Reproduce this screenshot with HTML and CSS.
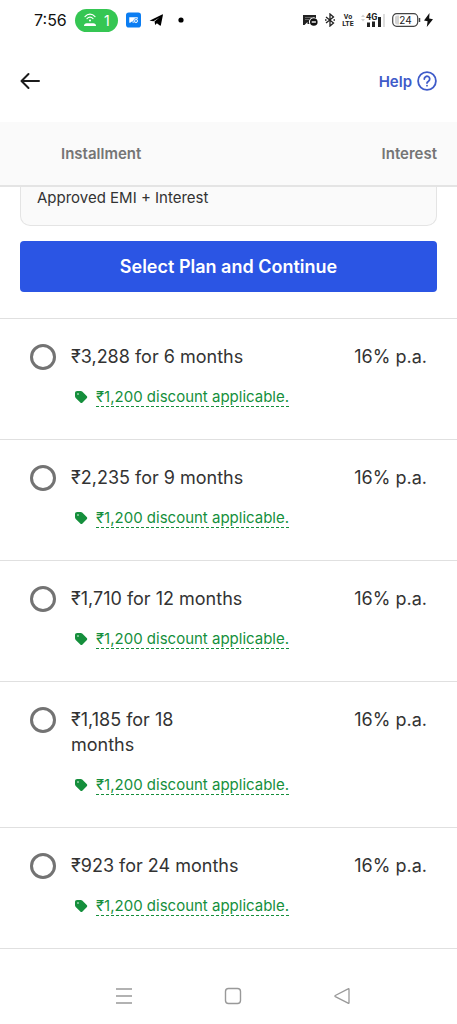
FILE: index.html
```html
<!DOCTYPE html>
<html lang="en">
<head>
<meta charset="utf-8">
<meta name="viewport" content="width=device-width, initial-scale=1">
<title>Select EMI plan</title>
<link rel="stylesheet" href="styles.css">
</head>
<body>
<svg class="defs" width="0" height="0" aria-hidden="true">
  <symbol id="tag" viewBox="0 0 14 14"><path fill-rule="evenodd" d="M1 3.200C1 1.800 1.800 1 3.200 1h3.600c.6 0 1 .2 1.400.6l4.500 4.400c.7.700.7 1.500 0 2.200l-4.200 4.200c-.7.700-1.500.7-2.200 0L1.700 7.900C1.200 7.400 1 6.900 1 6.300zM4 3.200a.8.800 0 1 0 0 1.600.8.800 0 0 0 0-1.600z"/></symbol>
</svg>
<div class="screen">
  <div class="status">
    <div class="status-group">
      <span class="clock">7:56</span>
      <span class="hotspot">
        <svg width="14" height="14" viewBox="0 0 14 14" fill="none" stroke="#fff" stroke-width="1.200" stroke-linecap="round"><path d="M2 3.600C4.800.4 9.200.4 12 3.600M4 5.600c1.800-1.900 4.200-1.900 6 0"/><circle cx="7" cy="7.400" r="1" fill="#fff" stroke="none"/><path d="M1 13c0-1.800 1-2.800 2.800-2.800h6.400c1.800 0 2.800 1 2.800 2.800z" fill="#fff" stroke="none"/></svg>
        1
      </span>
      <svg width="15" height="16" viewBox="0 0 16 16"><rect width="16" height="16" rx="3" fill="#0b7df2"/><path d="M3.500 5h9v2.200a2.700 2.700 0 0 0-4 3.800H7V9L4.500 11h-1z" fill="#fff"/><circle cx="10.500" cy="9" r="1.800" fill="none" stroke="#fff"/><path d="M9.800 9h1.400" stroke="#fff" stroke-width=".8"/></svg>
      <svg class="plane" width="15" height="14" viewBox="0 0 16 14"><path d="M1 7.400 14 1.100c.6-.3 1 0 .8.700l-2.100 10.600c-.1.600-.6.800-1.100.4L8.400 10.400l-1.800 1.800-.7-3.500 5.300-4.400-6.500 3.900-3.500-.3c-.5-.1-.6-.4-.2-.5z"/></svg>
      <svg width="6" height="6" viewBox="0 0 6 6"><circle cx="3" cy="3" r="2.600"/></svg>
    </div>
    <div class="status-group status-right">
      <svg width="15" height="13" viewBox="0 0 15 13"><path d="M0 1h13v3.200A4.500 4.500 0 0 0 6.500 10H4.500V8L1.500 11H0z" fill="#222"/><path d="M2 3.500h8M2 5.500h4" stroke="#888" stroke-width=".7"/><circle cx="10.800" cy="8" r="3.800" fill="#111"/><path d="M8.700 8h4.200" stroke="#fff" stroke-width="1.400"/></svg>
      <svg width="10" height="14" viewBox="0 0 10 14" fill="none" stroke="#222" stroke-width="1.300"><path d="M1 4l7.500 6L5 13V1l3.500 3L1 10"/><path d="M0 7h1.500M8.500 7H10"/></svg>
      <svg width="12" height="14" viewBox="0 0 12 14" font-family="Roboto, sans-serif" font-size="7" font-weight="700" fill="#222" text-anchor="middle"><text x="6" y="6">Vo</text><text x="6" y="13">LTE</text></svg>
      <svg width="24" height="16" viewBox="0 0 24 16"><path d="M0 5l2-2.500L4 5zM0 7l2 2.500L4 7z" fill="#d0d0d0"/><text x="5" y="8" font-family="Roboto, sans-serif" font-size="9" font-weight="700" fill="#222">4G</text><path d="M6 10.500h3V15H6zM11 9.500h3V15h-3zM17 5h3v10h-3z" fill="#222"/><path d="M22 2h2v13h-2z" fill="#ddd"/></svg>
      <svg width="29" height="14" viewBox="0 0 29 14"><rect x=".7" y=".7" width="25" height="12.600" rx="4" fill="#fff" stroke="#444" stroke-width="1.200"/><path d="M3 4.500A2 2 0 0 1 5 2.500h2v9H5a2 2 0 0 1-2-2z" fill="#d3d3d3"/><path d="M27.500 5v4" stroke="#444" stroke-width="1.500"/><text x="13.500" y="10.800" font-family="Inter, sans-serif" font-size="10" text-anchor="middle" fill="#222">24</text></svg>
      <svg class="bolt" width="9" height="14" viewBox="0 0 9 14"><path d="M5.500 0 0 7.600l3.600.6L2.800 14 9 6.200l-3.800-.6z" fill="#111"/></svg>
    </div>
  </div>

  <header class="topbar">
    <button class="back" type="button" aria-label="Back">
      <svg width="20" height="18" viewBox="0 0 20 18" fill="none" stroke="#1b1b1b" stroke-width="2" stroke-linecap="round" stroke-linejoin="round"><path d="M19 9H2M8.500 2 1.500 9l7 7"/></svg>
    </button>
    <a class="help" href="#help">Help
      <svg width="20" height="20" viewBox="0 0 20 20" fill="none" stroke="#3f5bc9" stroke-width="1.800" stroke-linecap="round"><circle cx="10" cy="10" r="8.900"/><path d="M7.300 8a2.700 2.700 0 1 1 4.200 2.200c-.9.600-1.500 1-1.500 1.900"/><path d="M10 14.600v.1"/></svg>
    </a>
  </header>

  <div class="columns"><span>Installment</span><span>Interest</span></div>

  <main>
    <div class="offer">
      <p class="note">Approved EMI + Interest</p>
      <button class="cta" type="button">Select Plan and Continue</button>
    </div>
    <ul class="plans">
      <li class="plan">
        <input class="radio" type="radio" name="plan" id="p6">
        <div class="details"><label for="p6">₹3,288 for 6 months</label>
          <div class="discount"><svg width="14" height="14"><use href="#tag"/></svg><a href="#discount">₹1,200 discount applicable.</a></div></div>
        <span class="rate">16% p.a.</span>
      </li>
      <li class="plan">
        <input class="radio" type="radio" name="plan" id="p9">
        <div class="details"><label for="p9">₹2,235 for 9 months</label>
          <div class="discount"><svg width="14" height="14"><use href="#tag"/></svg><a href="#discount">₹1,200 discount applicable.</a></div></div>
        <span class="rate">16% p.a.</span>
      </li>
      <li class="plan">
        <input class="radio" type="radio" name="plan" id="p12">
        <div class="details"><label for="p12">₹1,710 for 12 months</label>
          <div class="discount"><svg width="14" height="14"><use href="#tag"/></svg><a href="#discount">₹1,200 discount applicable.</a></div></div>
        <span class="rate">16% p.a.</span>
      </li>
      <li class="plan">
        <input class="radio" type="radio" name="plan" id="p18">
        <div class="details"><label for="p18">₹1,185 for 18<br>months</label>
          <div class="discount"><svg width="14" height="14"><use href="#tag"/></svg><a href="#discount">₹1,200 discount applicable.</a></div></div>
        <span class="rate">16% p.a.</span>
      </li>
      <li class="plan">
        <input class="radio" type="radio" name="plan" id="p24">
        <div class="details"><label for="p24">₹923 for 24 months</label>
          <div class="discount"><svg width="14" height="14"><use href="#tag"/></svg><a href="#discount">₹1,200 discount applicable.</a></div></div>
        <span class="rate">16% p.a.</span>
      </li>
    </ul>
  </main>

  <nav class="sysnav">
    <button type="button" aria-label="Recent apps"><svg width="18" height="18" viewBox="0 0 18 18" stroke="#999" stroke-width="1.400"><path d="M1 2h16M1 9h16M1 16h16"/></svg></button>
    <button type="button" aria-label="Home"><svg width="18" height="18" viewBox="0 0 18 18" fill="none" stroke="#999" stroke-width="1.400"><rect x="1.500" y="1.500" width="15" height="15" rx="3"/></svg></button>
    <button type="button" aria-label="Back"><svg width="18" height="18" viewBox="0 0 18 18" fill="none" stroke="#999" stroke-width="1.300" stroke-linejoin="round"><path d="M16 2.200v13.600c0 .5-.4.700-.9.400L2.300 9.600c-.5-.3-.5-.8 0-1.100l12.800-6.700c.5-.3.9-.1.900.4z"/></svg></button>
  </nav>
</div>
</body>
</html>
```

FILE: styles.css
```css
* { box-sizing: border-box; }
body {
  margin: 0;
  background: #fff;
  color: #333;
  font-family: Inter, "Noto Sans", sans-serif;
}
button { padding: 0; border: 0; background: none; font: inherit; }
svg { display: block; flex: none; }
.defs { position: absolute; }
.screen { display: flex; flex-direction: column; min-height: 100vh; }

.status {
  display: flex;
  align-items: center;
  justify-content: space-between;
  height: 40px;
  padding: 0 24px 0 34px;
}
.status-group { display: flex; align-items: center; gap: 8px; }
.status-right { gap: 7px; }
.bolt { margin-left: -4px; }
.clock { color: #111; font-size: 16px; }
.hotspot {
  display: flex;
  align-items: center;
  justify-content: center;
  gap: 7px;
  width: 43px;
  height: 23px;
  border-radius: 12px;
  background: #35c653;
  color: #fff;
  font-size: 14px;
}
.plane { margin-right: 6px; }

.topbar {
  display: flex;
  align-items: center;
  justify-content: space-between;
  height: 82px;
  padding: 0 20px;
}
.help {
  display: flex;
  align-items: center;
  gap: 5px;
  color: #3f5bc9;
  font-size: 15px;
  font-weight: 600;
  text-decoration: none;
}

.columns {
  display: flex;
  align-items: center;
  justify-content: space-between;
  height: 65px;
  padding: 0 20px 0 61px;
  border-bottom: 2px solid #e4e4e4;
  background: #fafafa;
  color: #757575;
  font-size: 15px;
  font-weight: 600;
}

.offer { padding: 0 20px 26px; }
.note {
  margin: 0 0 15px;
  padding: 0 16px 16px;
  border: solid #e4e4e4;
  border-width: 0 1px 1px;
  border-radius: 0 0 10px 10px;
  background: #fafafa;
  font-size: 15px;
  line-height: 22px;
}
.cta {
  display: block;
  width: 100%;
  height: 51px;
  border-radius: 4px;
  background: #2b55e4;
  color: #fff;
  font-size: 18px;
  font-weight: 600;
}

.plans { margin: 0; padding: 0; border-bottom: 1px solid #e0e0e0; list-style: none; }
.plan {
  display: flex;
  align-items: flex-start;
  padding: 25px 30px 32px;
  border-top: 1px solid #e0e0e0;
  font-size: 18px;
  line-height: 25px;
}
.radio {
  appearance: none;
  flex: none;
  width: 26px;
  height: 26px;
  margin: 0 15px 0 0;
  border: 3px solid #737373;
  border-radius: 50%;
}
.radio:checked { border-width: 8px; border-color: #2b55e4; }
.details { flex: 1; }
.details label { display: block; }
.discount {
  display: flex;
  align-items: center;
  gap: 8px;
  margin-top: 18px;
  padding-left: 3px;
  color: #158f3c;
  fill: #158f3c;
  font-size: 15px;
  line-height: 19px;
}
.discount a { border-bottom: 1px dashed #158f3c; color: inherit; text-decoration: none; }

.sysnav {
  display: flex;
  flex: 1;
  align-items: center;
  justify-content: center;
  gap: 91px;
  padding: 18px 0 0 9px;
}
```
